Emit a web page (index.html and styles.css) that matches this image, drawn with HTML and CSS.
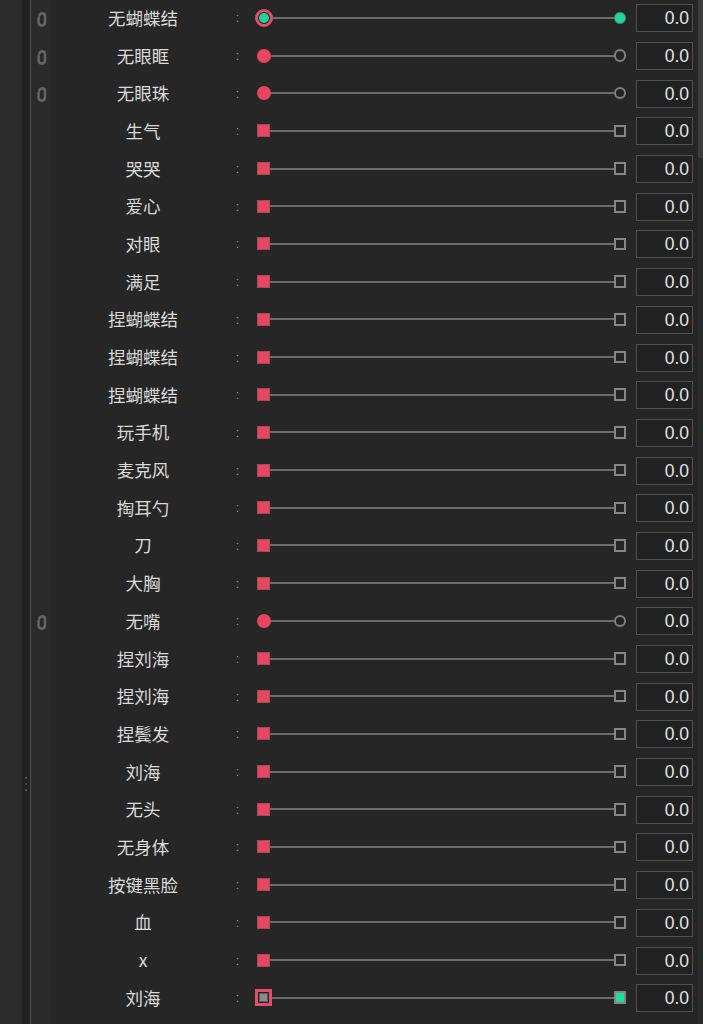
FILE: index.html
```html
<!DOCTYPE html>
<html lang="zh">
<head>
<meta charset="utf-8">
<link rel="stylesheet" href="styles.css">
</head>
<body>
<div class="app">
  <div class="gutter"></div>
  <div class="splitter"><span class="dot"></span><span class="dot"></span><span class="dot"></span></div>
  <div class="divline"></div>
  <div class="panel">
    <div class="row">
      <div class="link"><svg viewBox="0 0 11 15" width="11" height="15"><path d="M3.4 3.4 Q4 1.4 6.2 1.4 Q9 1.4 9 4.3 V10.6 Q9 13.6 5.8 13.6 Q2.6 13.6 2.6 10.6 V5.8" fill="none" stroke="#636363" stroke-width="2.6" stroke-linecap="round"/></svg></div>
      <div class="label">无蝴蝶结</div><div class="colon">:</div>
      <div class="slider"><span class="h c ring"><span class="in"></span></span><span class="track"></span><span class="h c endon"></span></div>
      <div class="val">0.0</div>
    </div>
    <div class="row">
      <div class="link"><svg viewBox="0 0 11 15" width="11" height="15"><path d="M3.4 3.4 Q4 1.4 6.2 1.4 Q9 1.4 9 4.3 V10.6 Q9 13.6 5.8 13.6 Q2.6 13.6 2.6 10.6 V5.8" fill="none" stroke="#636363" stroke-width="2.6" stroke-linecap="round"/></svg></div>
      <div class="label">无眼眶</div><div class="colon">:</div>
      <div class="slider"><span class="h c on"></span><span class="track"></span><span class="h c off"></span></div>
      <div class="val">0.0</div>
    </div>
    <div class="row">
      <div class="link"><svg viewBox="0 0 11 15" width="11" height="15"><path d="M3.4 3.4 Q4 1.4 6.2 1.4 Q9 1.4 9 4.3 V10.6 Q9 13.6 5.8 13.6 Q2.6 13.6 2.6 10.6 V5.8" fill="none" stroke="#636363" stroke-width="2.6" stroke-linecap="round"/></svg></div>
      <div class="label">无眼珠</div><div class="colon">:</div>
      <div class="slider"><span class="h c on"></span><span class="track"></span><span class="h c off"></span></div>
      <div class="val">0.0</div>
    </div>
    <div class="row"><div class="link"></div><div class="label">生气</div><div class="colon">:</div><div class="slider"><span class="h s on"></span><span class="track"></span><span class="h s off"></span></div><div class="val">0.0</div></div>
    <div class="row"><div class="link"></div><div class="label">哭哭</div><div class="colon">:</div><div class="slider"><span class="h s on"></span><span class="track"></span><span class="h s off"></span></div><div class="val">0.0</div></div>
    <div class="row"><div class="link"></div><div class="label">爱心</div><div class="colon">:</div><div class="slider"><span class="h s on"></span><span class="track"></span><span class="h s off"></span></div><div class="val">0.0</div></div>
    <div class="row"><div class="link"></div><div class="label">对眼</div><div class="colon">:</div><div class="slider"><span class="h s on"></span><span class="track"></span><span class="h s off"></span></div><div class="val">0.0</div></div>
    <div class="row"><div class="link"></div><div class="label">满足</div><div class="colon">:</div><div class="slider"><span class="h s on"></span><span class="track"></span><span class="h s off"></span></div><div class="val">0.0</div></div>
    <div class="row"><div class="link"></div><div class="label">捏蝴蝶结</div><div class="colon">:</div><div class="slider"><span class="h s on"></span><span class="track"></span><span class="h s off"></span></div><div class="val">0.0</div></div>
    <div class="row"><div class="link"></div><div class="label">捏蝴蝶结</div><div class="colon">:</div><div class="slider"><span class="h s on"></span><span class="track"></span><span class="h s off"></span></div><div class="val">0.0</div></div>
    <div class="row"><div class="link"></div><div class="label">捏蝴蝶结</div><div class="colon">:</div><div class="slider"><span class="h s on"></span><span class="track"></span><span class="h s off"></span></div><div class="val">0.0</div></div>
    <div class="row"><div class="link"></div><div class="label">玩手机</div><div class="colon">:</div><div class="slider"><span class="h s on"></span><span class="track"></span><span class="h s off"></span></div><div class="val">0.0</div></div>
    <div class="row"><div class="link"></div><div class="label">麦克风</div><div class="colon">:</div><div class="slider"><span class="h s on"></span><span class="track"></span><span class="h s off"></span></div><div class="val">0.0</div></div>
    <div class="row"><div class="link"></div><div class="label">掏耳勺</div><div class="colon">:</div><div class="slider"><span class="h s on"></span><span class="track"></span><span class="h s off"></span></div><div class="val">0.0</div></div>
    <div class="row"><div class="link"></div><div class="label">刀</div><div class="colon">:</div><div class="slider"><span class="h s on"></span><span class="track"></span><span class="h s off"></span></div><div class="val">0.0</div></div>
    <div class="row"><div class="link"></div><div class="label">大胸</div><div class="colon">:</div><div class="slider"><span class="h s on"></span><span class="track"></span><span class="h s off"></span></div><div class="val">0.0</div></div>
    <div class="row">
      <div class="link"><svg viewBox="0 0 11 15" width="11" height="15"><path d="M3.4 3.4 Q4 1.4 6.2 1.4 Q9 1.4 9 4.3 V10.6 Q9 13.6 5.8 13.6 Q2.6 13.6 2.6 10.6 V5.8" fill="none" stroke="#636363" stroke-width="2.6" stroke-linecap="round"/></svg></div>
      <div class="label">无嘴</div><div class="colon">:</div>
      <div class="slider"><span class="h c on"></span><span class="track"></span><span class="h c off"></span></div>
      <div class="val">0.0</div>
    </div>
    <div class="row"><div class="link"></div><div class="label">捏刘海</div><div class="colon">:</div><div class="slider"><span class="h s on"></span><span class="track"></span><span class="h s off"></span></div><div class="val">0.0</div></div>
    <div class="row"><div class="link"></div><div class="label">捏刘海</div><div class="colon">:</div><div class="slider"><span class="h s on"></span><span class="track"></span><span class="h s off"></span></div><div class="val">0.0</div></div>
    <div class="row"><div class="link"></div><div class="label">捏鬓发</div><div class="colon">:</div><div class="slider"><span class="h s on"></span><span class="track"></span><span class="h s off"></span></div><div class="val">0.0</div></div>
    <div class="row"><div class="link"></div><div class="label">刘海</div><div class="colon">:</div><div class="slider"><span class="h s on"></span><span class="track"></span><span class="h s off"></span></div><div class="val">0.0</div></div>
    <div class="row"><div class="link"></div><div class="label">无头</div><div class="colon">:</div><div class="slider"><span class="h s on"></span><span class="track"></span><span class="h s off"></span></div><div class="val">0.0</div></div>
    <div class="row"><div class="link"></div><div class="label">无身体</div><div class="colon">:</div><div class="slider"><span class="h s on"></span><span class="track"></span><span class="h s off"></span></div><div class="val">0.0</div></div>
    <div class="row"><div class="link"></div><div class="label">按键黑脸</div><div class="colon">:</div><div class="slider"><span class="h s on"></span><span class="track"></span><span class="h s off"></span></div><div class="val">0.0</div></div>
    <div class="row"><div class="link"></div><div class="label">血</div><div class="colon">:</div><div class="slider"><span class="h s on"></span><span class="track"></span><span class="h s off"></span></div><div class="val">0.0</div></div>
    <div class="row"><div class="link"></div><div class="label">x</div><div class="colon">:</div><div class="slider"><span class="h s on"></span><span class="track"></span><span class="h s off"></span></div><div class="val">0.0</div></div>
    <div class="row"><div class="link"></div><div class="label">刘海</div><div class="colon">:</div><div class="slider"><span class="h s sring"><span class="in"></span></span><span class="track"></span><span class="h s endon"></span></div><div class="val">0.0</div></div>
  </div>
  <div class="scrollbar"><div class="thumb"></div></div>
</div>
</body>
</html>
```
FILE: styles.css
```css
html, body {
  margin: 0;
  padding: 0;
  background: #262626;
  overflow: hidden;
}
.app {
  display: flex;
  width: 703px;
  height: 1024px;
  overflow: hidden;
  font-family: "Liberation Sans", "Noto Sans CJK SC", sans-serif;
}
.gutter {
  width: 22px;
  flex: none;
  background: #2c2c2c;
}
.splitter {
  width: 8px;
  flex: none;
  background: #222222;
  display: flex;
  flex-direction: column;
  align-items: center;
  justify-content: flex-start;
  padding-top: 777px;
  box-sizing: border-box;
  gap: 4px;
}
.dot {
  width: 2px;
  height: 2px;
  border-radius: 1px;
  background: #5a5a5a;
}
.divline {
  width: 1px;
  flex: none;
  background: #505050;
}
.panel {
  flex: 1;
  margin-top: -1px;
  background: linear-gradient(to right, #2a2a2a 0, #2a2a2a 20px, #262626 20px);
}
.row {
  display: grid;
  grid-template-columns: 20px 184px 5px 396px 57px;
  align-items: center;
  height: 37.7px;
}
.link {
  display: flex;
  justify-content: center;
  align-items: center;
  padding-top: 3px;
  padding-left: 0;
}
.label {
  text-align: center;
  color: #dadada;
  font-size: 17.5px;
  font-family: "Noto Sans CJK SC", sans-serif;
  line-height: 20px;
}
.colon {
  text-align: center;
  color: #9a9a9a;
  font-size: 12px;
  line-height: 12px;
  padding-top: 1px;
}
.slider {
  display: flex;
  align-items: center;
  padding-left: 15px;
  padding-right: 9px;
}
.track {
  flex: 1;
  height: 2px;
  background: #6c6c6c;
}
.h {
  flex: none;
  box-sizing: border-box;
  display: flex;
  align-items: center;
  justify-content: center;
}
.h.c { border-radius: 50%; }
.h.c.on {
  width: 14px;
  height: 14px;
  margin-left: 1.5px;
  background: #e8465f;
}
.h.c.off {
  width: 12.5px;
  height: 12.5px;
  border: 2px solid #808080;
  background: #232323;
  margin-right: 1px;
}
.h.c.ring {
  width: 18px;
  height: 18px;
  border: 3px solid #e0506a;
  background: #232323;
}
.h.c.ring .in {
  width: 10px;
  height: 10px;
  border-radius: 50%;
  background: #1fd39c;
}
.h.c.endon {
  width: 11.5px;
  height: 11.5px;
  background: #1fd8a0;
  border: 1px solid #4f7f70;
  margin-right: 1.5px;
}
.h.s.on {
  width: 13px;
  height: 13px;
  margin-left: 2px;
  background: #e8455f;
  border: 1px solid #a14d5c;
}
.h.s.off {
  width: 12.5px;
  height: 12.5px;
  border: 2px solid #858585;
  background: #242424;
  margin-right: 1px;
}
.h.s.sring {
  width: 17px;
  height: 17px;
  border: 3px solid #e0506a;
  background: #232323;
}
.h.s.sring .in {
  width: 9px;
  height: 9px;
  background: #8a8a8a;
  border: 1px solid #5a5a5a;
  box-sizing: border-box;
}
.h.s.endon {
  width: 12.5px;
  height: 12.5px;
  background: #1fdca2;
  border: 2px solid #858585;
  margin-right: 1px;
}
.val {
  box-sizing: border-box;
  height: 28px;
  border: 1px solid #505050;
  background: #212121;
  color: #e4e4e4;
  font-size: 17.5px;
  line-height: 26px;
  text-align: right;
  padding-right: 3px;
  margin-top: 1px;
}
.scrollbar {
  width: 5px;
  flex: none;
  background: #2a2a2a;
}
.thumb {
  height: 158px;
  background: #3c3c3c;
}
```
